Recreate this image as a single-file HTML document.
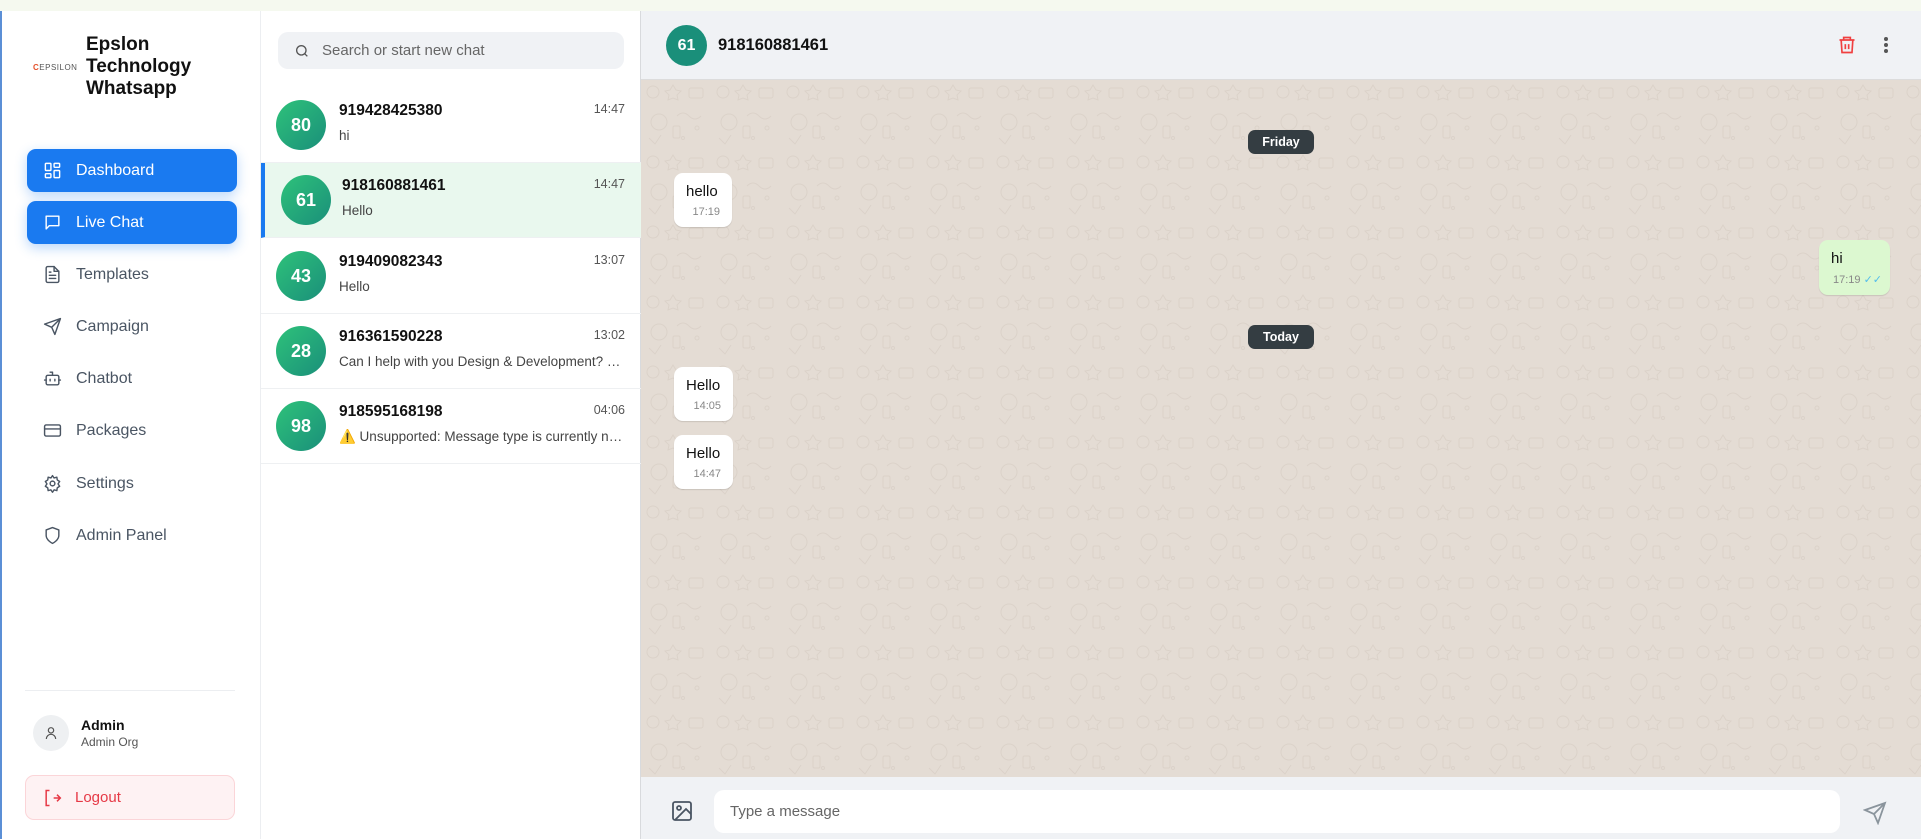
<!DOCTYPE html>
<html><head><meta charset="utf-8"><style>
*{box-sizing:border-box;margin:0;padding:0}
body{width:1921px;height:839px;overflow:hidden;font-family:"Liberation Sans",sans-serif;background:#f5f9ef;position:relative}
.abs{position:absolute}
#side{left:0;top:11px;width:261px;height:828px;background:#fff;border-right:1px solid #eceef1;border-left:2px solid #5b8fd6}
.nav{position:absolute;left:25px;width:210px;height:43px;border-radius:9px;display:flex;align-items:center;padding-left:16px;font-size:16px;color:#4a5563}
.nav svg{width:19px;height:19px;margin-right:14px;fill:none;stroke:currentColor;stroke-width:1.8;stroke-linecap:round;stroke-linejoin:round}
.nav.act{background:#1a7af0;color:#fff;box-shadow:0 4px 12px rgba(26,122,240,.3)}
#list{left:261px;top:11px;width:380px;height:828px;background:#fff;border-right:1px solid #d8dadd}
.row{position:absolute;left:0;width:380px;height:75px;border-bottom:1px solid #eef0f2}
.av{position:absolute;width:50px;height:50px;border-radius:50%;background:linear-gradient(135deg,#2ec27a,#1a8f7a);color:#fff;font-weight:bold;font-size:18px;display:flex;align-items:center;justify-content:center}
.nm{position:absolute;left:78px;top:14px;font-weight:bold;font-size:15.5px;color:#111}
.tm{position:absolute;right:16px;top:14px;font-size:12.5px;color:#555}
.ms{position:absolute;left:78px;top:40px;font-size:13.5px;color:#444;white-space:nowrap;width:285px;overflow:hidden;text-overflow:ellipsis}
#pane{left:641px;top:11px;width:1280px;height:828px;background:#e4dcd4}
.bub{position:absolute;background:#fff;border-radius:9px;box-shadow:0 1px 1px rgba(0,0,0,.12);padding:10px 12px 0 12px;font-size:15px;color:#111;white-space:nowrap}
.bub small{display:block;text-align:right;font-size:11px;color:#888;margin-top:6px}
.chip{position:absolute;left:607px;width:66px;height:24px;border-radius:7px;background:#343d42;color:#fff;font-size:12.5px;display:flex;align-items:center;justify-content:center;font-weight:bold}
</style></head><body>
<div id="side" class="abs">
  <div class="abs" style="left:31px;top:52px;font-size:8px;color:#555;letter-spacing:.5px"><span style="color:#e4502a;font-weight:bold">C</span>EPSILON</div>
  <div class="abs" style="left:84px;top:23px;font-size:19px;font-weight:bold;line-height:22px;color:#111">Epslon<br>Technology<br>Whatsapp</div>
  <div class="nav act" style="top:138px"><svg viewBox="0 0 24 24"><rect x="3" y="3" width="7" height="9" rx="1"/><rect x="14" y="3" width="7" height="5" rx="1"/><rect x="14" y="12" width="7" height="9" rx="1"/><rect x="3" y="16" width="7" height="5" rx="1"/></svg>Dashboard</div>
  <div class="nav act" style="top:190px"><svg viewBox="0 0 24 24"><path d="M4 4h16v12H8l-4 4z"/></svg>Live Chat</div>
  <div class="nav" style="top:242px"><svg viewBox="0 0 24 24"><path d="M14 2H6a2 2 0 0 0-2 2v16a2 2 0 0 0 2 2h12a2 2 0 0 0 2-2V8z"/><path d="M14 2v6h6M8 13h8M8 17h8M8 9h2"/></svg>Templates</div>
  <div class="nav" style="top:294px"><svg viewBox="0 0 24 24"><path d="M22 2 11 13M22 2l-7 20-4-9-9-4z"/></svg>Campaign</div>
  <div class="nav" style="top:346px"><svg viewBox="0 0 24 24"><rect x="4" y="8" width="16" height="12" rx="2"/><path d="M12 8V4H9M2 14h2M20 14h2M9 13v2M15 13v2"/></svg>Chatbot</div>
  <div class="nav" style="top:398px"><svg viewBox="0 0 24 24"><rect x="2" y="5" width="20" height="14" rx="2"/><path d="M2 10h20"/></svg>Packages</div>
  <div class="nav" style="top:451px"><svg viewBox="0 0 24 24"><circle cx="12" cy="12" r="3"/><path d="M12 2l2 3 3.5-1 .5 3.5 3 2-2 3 2 3-3 2-.5 3.5-3.5-1-2 3-2-3-3.5 1-.5-3.5-3-2 2-3-2-3 3-2 .5-3.5 3.5 1z"/></svg>Settings</div>
  <div class="nav" style="top:503px"><svg viewBox="0 0 24 24"><path d="M12 22s8-4 8-10V5l-8-3-8 3v7c0 6 8 10 8 10z"/></svg>Admin Panel</div>
  <div class="abs" style="left:23px;top:679px;width:210px;border-top:1px solid #eceef1"></div>
  <div class="abs" style="left:31px;top:704px;width:36px;height:36px;border-radius:50%;background:#eef0f2;display:flex;align-items:center;justify-content:center"><svg width="16" height="16" viewBox="0 0 24 24" fill="none" stroke="#555" stroke-width="1.8"><circle cx="12" cy="8" r="4"/><path d="M5 21a7 7 0 0 1 14 0"/></svg></div>
  <div class="abs" style="left:79px;top:706px;font-size:14px;font-weight:bold;color:#111">Admin</div>
  <div class="abs" style="left:79px;top:724px;font-size:12px;color:#555">Admin Org</div>
  <div class="abs" style="left:23px;top:764px;width:210px;height:45px;border-radius:9px;background:#fef2f3;border:1px solid #fbd5d8;display:flex;align-items:center;padding-left:16px;color:#e63946;font-size:15px"><svg width="20" height="20" viewBox="0 0 24 24" fill="none" stroke="#e63946" stroke-width="1.8" style="margin-right:13px"><path d="M9 3H5v18h4M14 12h8M18 8l4 4-4 4"/></svg>Logout</div>
</div>
<div id="list" class="abs">
  <div class="abs" style="left:17px;top:21px;width:346px;height:37px;border-radius:10px;background:#f0f2f5;display:flex;align-items:center;padding-left:16px;font-size:15px;color:#666"><svg width="16" height="16" viewBox="0 0 24 24" fill="none" stroke="#555" stroke-width="2" style="margin-right:12px"><circle cx="11" cy="11" r="7"/><path d="M20 20l-4-4"/></svg>Search or start new chat</div>
  <div class="row" style="top:77px"><div class="av" style="left:15px;top:12px">80</div><div class="nm">919428425380</div><div class="tm">14:47</div><div class="ms">hi</div></div>
  <div class="row" style="top:152px;background:#e9f8ee;border-left:4px solid #1a7af0"><div class="av" style="left:16px;top:12px">61</div><div class="nm" style="left:77px;top:14px">918160881461</div><div class="tm">14:47</div><div class="ms" style="left:77px">Hello</div></div>
  <div class="row" style="top:228px"><div class="av" style="left:15px;top:12px">43</div><div class="nm">919409082343</div><div class="tm">13:07</div><div class="ms">Hello</div></div>
  <div class="row" style="top:303px"><div class="av" style="left:15px;top:12px">28</div><div class="nm">916361590228</div><div class="tm">13:02</div><div class="ms">Can I help with you Design &amp; Development? …</div></div>
  <div class="row" style="top:378px"><div class="av" style="left:15px;top:12px">98</div><div class="nm">918595168198</div><div class="tm">04:06</div><div class="ms">⚠️ Unsupported: Message type is currently not supported</div></div>
</div>
<div id="pane" class="abs">
  <svg class="abs" style="left:0;top:69px" width="1280" height="697"><defs><pattern id="p" width="70" height="70" patternUnits="userSpaceOnUse"><g fill="none" stroke="#dbd2c9" stroke-width="1"><circle cx="12" cy="12" r="6"/><path d="M32 5l3 5 5 1-4 4 1 5-5-2-5 2 1-5-4-4 5-1z"/><rect x="48" y="8" width="14" height="10" rx="2"/><circle cx="18" cy="42" r="8"/><path d="M36 36q6-6 12 0t12 0"/><circle cx="56" cy="48" r="2"/><circle cx="42" cy="58" r="1.5"/><path d="M8 58l6 6 6-9"/><rect x="32" y="46" width="7" height="12" rx="1.5"/></g></pattern></defs><rect width="1280" height="697" fill="url(#p)"/></svg>
  <div class="abs" style="left:0;top:0;width:1280px;height:69px;background:#f0f2f5;border-bottom:1px solid #dcdcdc"></div>
  <div class="abs" style="left:25px;top:14px;width:41px;height:41px;border-radius:50%;background:#1a8f7a;color:#fff;font-weight:bold;font-size:16px;display:flex;align-items:center;justify-content:center">61</div>
  <div class="abs" style="left:77px;top:25px;font-size:16.5px;font-weight:bold;color:#111">918160881461</div>
  <svg class="abs" style="left:1196px;top:24px" width="20" height="20" viewBox="0 0 24 24" fill="none" stroke="#f04040" stroke-width="2"><path d="M3 6h18M8 6V3h8v3M5 6l1 15h12l1-15M10 11v6M14 11v6"/></svg>
  <svg class="abs" style="left:1237px;top:24px" width="16" height="20" viewBox="0 0 16 20" fill="#555"><circle cx="8" cy="4" r="2"/><circle cx="8" cy="10" r="2"/><circle cx="8" cy="16" r="2"/></svg>
  <div class="chip" style="top:119px">Friday</div>
  <div class="bub" style="left:33px;top:162px;width:58px;height:54px">hello<small>17:19</small></div>
  <div class="bub" style="left:1178px;top:229px;width:71px;height:55px;background:#dcf8d0;padding-right:8px">hi<small>17:19 <span style="color:#53bdeb">✓✓</span></small></div>
  <div class="chip" style="top:314px">Today</div>
  <div class="bub" style="left:33px;top:356px;width:59px;height:54px">Hello<small>14:05</small></div>
  <div class="bub" style="left:33px;top:424px;width:59px;height:54px">Hello<small>14:47</small></div>
  <div class="abs" style="left:0;top:766px;width:1280px;height:62px;background:#f0f2f5"></div>
  <svg class="abs" style="left:29px;top:788px" width="24" height="24" viewBox="0 0 24 24" fill="none" stroke="#4a5563" stroke-width="1.8"><rect x="3" y="3" width="18" height="18" rx="2"/><circle cx="9" cy="9" r="2"/><path d="M21 15l-5-5L5 21"/></svg>
  <div class="abs" style="left:73px;top:779px;width:1126px;height:43px;border-radius:10px;background:#fff;display:flex;align-items:center;padding-left:16px;font-size:15px;color:#666">Type a message</div>
  <svg class="abs" style="left:1222px;top:790px" width="24" height="24" viewBox="0 0 24 24" fill="none" stroke="#8a949c" stroke-width="1.8"><path d="M22 2 11 13M22 2l-7 20-4-9-9-4z"/></svg>
</div>
</body></html>
